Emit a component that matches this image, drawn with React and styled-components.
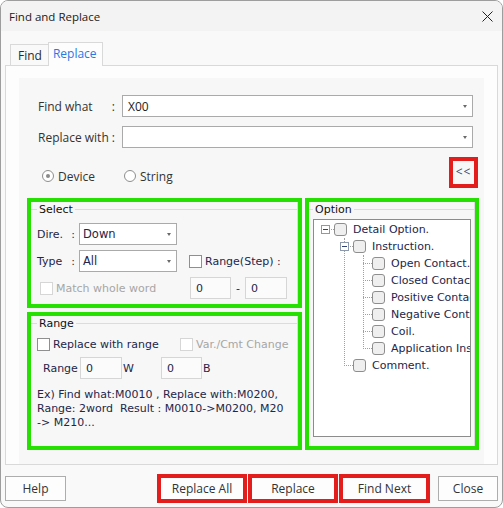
import React from 'react'
import styled, { createGlobalStyle } from 'styled-components'

const UI = `"Open Sans", "Noto Sans", sans-serif`
const TAHOMA = `"DejaVu Sans", "Liberation Sans", sans-serif`
const GREEN = '#25e000'
const RED = '#e31c1c'
const INK = '#23264a'

const GlobalStyle = createGlobalStyle`
  html, body {
    margin: 0;
    padding: 0;
    background: #fff;
  }
  * {
    box-sizing: border-box;
  }
`

function App() {
    return (
        <>
            <GlobalStyle />
            <Window>
                <TitleBar>
                    <span>Find and Replace</span>
                    <svg width="11" height="11" viewBox="0 0 11 11">
                        <path d="M0.5 0.5 L10.5 10.5 M10.5 0.5 L0.5 10.5" stroke="#222" strokeWidth="1" />
                    </svg>
                </TitleBar>

                <Body>
                    <Tabs>
                        <Tab>Find</Tab>
                        <Tab $active>Replace</Tab>
                    </Tabs>

                    <Panel>
                        <Inner>
                            <FormGrid>
                                <FieldLabel><span>Find what</span><span>:</span></FieldLabel>
                                <Combo $wide>X00<Arrow /></Combo>
                                <FieldLabel><span>Replace with</span><span>:</span></FieldLabel>
                                <Combo $wide><Arrow /></Combo>
                            </FormGrid>

                            <RadioRow>
                                <RadioGroup>
                                    <RadioItem><Radio $checked />Device</RadioItem>
                                    <RadioItem><Radio />String</RadioItem>
                                </RadioGroup>
                                <CollapseBox>&lt;&lt;</CollapseBox>
                            </RadioRow>

                            <Groups>
                                <Highlight>
                                    <GroupBox>
                                        <LegendRow><Legend>Select</Legend></LegendRow>
                                        <SelectGrid>
                                            <SmallLabel><span>Dire.</span><span>:</span></SmallLabel>
                                            <Combo>Down<Arrow /></Combo>
                                            <span />
                                            <SmallLabel><span>Type</span><span>:</span></SmallLabel>
                                            <Combo>All<Arrow /></Combo>
                                            <CheckItem $right><Check />Range(Step) :</CheckItem>
                                            <CheckItem $disabled $span><Check $disabled />Match whole word</CheckItem>
                                            <StepInputs>
                                                <NumBox $w={41}>0</NumBox>
                                                <Dash>-</Dash>
                                                <NumBox $w={42}>0</NumBox>
                                            </StepInputs>
                                        </SelectGrid>
                                    </GroupBox>
                                </Highlight>

                                <Highlight $tall>
                                    <GroupBox>
                                        <LegendRow $short><Legend>Option</Legend></LegendRow>
                                        <TreeBox>
                                            <TreeRow $level={0} $expander>
                                                <Expander />
                                                <TreeCheck />
                                                Detail Option.
                                            </TreeRow>
                                            <Branch $level={1}>
                                                <TreeRow $level={1} $expander>
                                                    <Expander />
                                                    <TreeCheck />
                                                    Instruction.
                                                </TreeRow>
                                                <Branch $level={2}>
                                                    {['Open Contact.', 'Closed Contact.', 'Positive Contact.', 'Negative Contact.', 'Coil.', 'Application Instruction.'].map((t) => (
                                                        <TreeRow key={t} $level={2}>
                                                            <Slot />
                                                            <TreeCheck />
                                                            {t}
                                                        </TreeRow>
                                                    ))}
                                                </Branch>
                                                <TreeRow $level={1}>
                                                    <Slot />
                                                    <TreeCheck />
                                                    Comment.
                                                </TreeRow>
                                            </Branch>
                                        </TreeBox>
                                    </GroupBox>
                                </Highlight>

                                <Highlight>
                                    <GroupBox>
                                        <LegendRow><Legend>Range</Legend></LegendRow>
                                        <RangeBody>
                                            <RangeChecks>
                                                <CheckItem><Check />Replace with range</CheckItem>
                                                <CheckItem $disabled><Check $disabled />Var./Cmt Change</CheckItem>
                                            </RangeChecks>
                                            <RangeInputs>
                                                <UnitLabel $w={38}>Range</UnitLabel>
                                                <NumBox $w={42}>0</NumBox>
                                                <UnitLabel $w={39}>W</UnitLabel>
                                                <NumBox $w={41}>0</NumBox>
                                                <UnitLabel>B</UnitLabel>
                                            </RangeInputs>
                                            <Example>
                                                <span>Ex) Find what:M0010 , Replace with:M0200,</span>
                                                <span>Range: 2word  Result : M0010-&gt;M0200, M20</span>
                                                <span>-&gt; M210...</span>
                                            </Example>
                                        </RangeBody>
                                    </GroupBox>
                                </Highlight>
                            </Groups>
                        </Inner>
                    </Panel>

                    <Footer>
                        <Button $w={61}>Help</Button>
                        <RedGroup>
                            <RedBox $w={90}><Face>Replace All</Face></RedBox>
                            <RedBox $w={90}><Face>Replace</Face></RedBox>
                            <RedBox $w={91}><Face>Find Next</Face></RedBox>
                        </RedGroup>
                        <Button $w={60} $close>Close</Button>
                    </Footer>
                </Body>
            </Window>
        </>
    )
}

export default App

const Window = styled.div`
    width: 503px;
    height: 508px;
    border: 1px solid #9d9d9d;
    border-radius: 8px;
    overflow: hidden;
    background: #f9f9f9;
    display: flex;
    flex-direction: column;
    font-family: ${UI};
    font-size: 12px;
    color: #2a2a2a;
`

const TitleBar = styled.div`
    height: 30px;
    flex-shrink: 0;
    background: #f3f3f3;
    display: flex;
    align-items: center;
    justify-content: space-between;
    padding: 0 9px 0 8px;
    font-size: 11.5px;
    color: #1a1a1a;
`

const Body = styled.div`
    flex: 1;
    padding: 11px 4px 0 4px;
`

const Tabs = styled.div`
    display: flex;
    align-items: flex-end;
    height: 23px;
    margin-left: 5px;
`

const Tab = styled.div`
    position: relative;
    z-index: 1;
    height: ${(p) => (p.$active ? '24px' : '21px')};
    margin-bottom: ${(p) => (p.$active ? '-1px' : '0')};
    padding: ${(p) => (p.$active ? '2px 5px 0 4px' : '2px 6px 0 7px')};
    border: 1px solid #d9d9d9;
    border-bottom: none;
    border-right: ${(p) => (p.$active ? '1px solid #d9d9d9' : 'none')};
    background: ${(p) => (p.$active ? '#fdfdfd' : '#f9f9f9')};
    color: ${(p) => (p.$active ? '#2b78e4' : '#2a2a2a')};
    font-size: 12px;
    line-height: 18px;
`

const Panel = styled.div`
    height: 400px;
    border: 1px solid #d9d9d9;
    background: #fdfdfd;
    padding: 12px 13px 0 13px;
`

const Inner = styled.div`
    height: 386px;
    background: #f7f7f7;
    padding: 17px 4px 0 8px;
`

const FormGrid = styled.div`
    display: grid;
    grid-template-columns: 84px 1fr;
    row-gap: 9px;
    padding: 0 7px 0 11px;
`

const FieldLabel = styled.div`
    display: flex;
    justify-content: space-between;
    align-items: center;
    padding-right: 7px;
    color: #333;
`

const Combo = styled.div`
    position: relative;
    height: 22px;
    width: ${(p) => (p.$wide ? 'auto' : '98px')};
    border: 1px solid #aaaaaa;
    background: #fff;
    display: flex;
    align-items: center;
    padding-left: ${(p) => (p.$wide ? '5px' : '3px')};
    font-family: ${(p) => (p.$wide ? UI : TAHOMA)};
    font-size: ${(p) => (p.$wide ? '12px' : '11.5px')};
    color: ${(p) => (p.$wide ? '#222' : INK)};
`

const Arrow = styled.span`
    position: absolute;
    right: 5px;
    top: 9px;
    width: 0;
    height: 0;
    border-left: 2.5px solid transparent;
    border-right: 2.5px solid transparent;
    border-top: 3px solid #6a6a6a;
`

const RadioRow = styled.div`
    margin-top: 9px;
    height: 31px;
    display: flex;
    align-items: center;
    padding: 0 2px 0 15px;
`

const RadioGroup = styled.div`
    display: grid;
    grid-template-columns: 82px auto;
    margin-top: 7px;
`

const RadioItem = styled.label`
    display: flex;
    align-items: center;
    gap: 4px;
    height: 16px;
    color: #333;
`

const Radio = styled.span`
    width: 12px;
    height: 12px;
    border-radius: 50%;
    border: 1px solid #8e8e8e;
    background: #fff;
    display: flex;
    align-items: center;
    justify-content: center;

    &::after {
        content: '';
        display: ${(p) => (p.$checked ? 'block' : 'none')};
        width: 4px;
        height: 4px;
        border-radius: 50%;
        background: #8a8a8a;
    }
`

const CollapseBox = styled.div`
    margin-left: auto;
    width: 29px;
    height: 31px;
    border: 4px solid ${RED};
    display: flex;
    align-items: center;
    justify-content: center;
    letter-spacing: 1px;
    color: #3a4a6a;
    font-size: 12px;
    padding-bottom: 2px;
`

const Groups = styled.div`
    margin-top: 10px;
    display: grid;
    grid-template-columns: 275px 174px;
    grid-template-rows: 110px 138px;
    column-gap: 3px;
    row-gap: 4px;
`

const Highlight = styled.div`
    border: 4px solid ${GREEN};
    grid-row: ${(p) => (p.$tall ? '1 / 3' : 'auto')};
    grid-column: ${(p) => (p.$tall ? '2' : '1')};
    min-height: 0;
`

const GroupBox = styled.div`
    height: 100%;
    border-right: 1px solid #dcdcdc;
    display: flex;
    flex-direction: column;
    font-family: ${TAHOMA};
    font-size: 11px;
    color: ${INK};
`

const LegendRow = styled.div`
    display: flex;
    align-items: center;
    height: 14px;
    flex-shrink: 0;

    &::before {
        content: '';
        width: ${(p) => (p.$short ? '4px' : '6px')};
        height: 1px;
        background: #dcdcdc;
    }

    &::after {
        content: '';
        flex: 1;
        height: 1px;
        background: #dcdcdc;
    }
`

const Legend = styled.span`
    padding: 0 2px;
    color: #111;
`

const SelectGrid = styled.div`
    margin-top: 7px;
    padding-left: 6px;
    display: grid;
    grid-template-columns: 42px 98px auto;
    grid-template-rows: 22px 22px 22px;
    row-gap: 5px;
    align-items: center;
`

const SmallLabel = styled.div`
    display: flex;
    justify-content: space-between;
    padding-right: 4px;
`

const CheckItem = styled.label`
    display: flex;
    align-items: center;
    gap: 3px;
    white-space: nowrap;
    color: ${(p) => (p.$disabled ? '#a6a6a6' : INK)};
    grid-column: ${(p) => (p.$span ? '1 / 3' : 'auto')};
    padding-left: ${(p) => (p.$span ? '3px' : '0')};
    margin-left: ${(p) => (p.$right ? '12px' : '0')};
`

const Check = styled.span`
    width: 13px;
    height: 13px;
    flex-shrink: 0;
    border: 1px solid ${(p) => (p.$disabled ? '#d6d6d6' : '#8f8f8f')};
    background: #fff;
`

const StepInputs = styled.div`
    display: flex;
    align-items: center;
    margin-left: 13px;
`

const NumBox = styled.div`
    width: ${(p) => p.$w}px;
    height: 22px;
    border: 1px solid #d6d6d6;
    background: #fbfbfb;
    padding-left: 5px;
    display: flex;
    align-items: center;
    color: ${INK};
`

const Dash = styled.span`
    width: 14px;
    text-align: center;
`

const RangeBody = styled.div`
    padding-left: 6px;
`

const RangeChecks = styled.div`
    margin-top: 6px;
    height: 16px;
    display: grid;
    grid-template-columns: 143px auto;
    align-items: center;
`

const RangeInputs = styled.div`
    margin-top: 5px;
    height: 22px;
    display: flex;
    align-items: center;
    padding-left: 5px;
`

const UnitLabel = styled.span`
    width: ${(p) => (p.$w ? `${p.$w}px` : 'auto')};
    padding-left: 1px;
`

const Example = styled.div`
    margin-top: 9px;
    line-height: 14px;

    span {
        display: block;
        white-space: pre;
    }
`

const TreeBox = styled.div`
    margin: 3px 3px 0 4px;
    height: 218px;
    border: 1px solid #8c8c8c;
    background: #fff;
    padding-top: 1px;
    overflow: hidden;
`

const Branch = styled.div`
    position: relative;

    &::before {
        content: '';
        position: absolute;
        left: ${(p) => 7 + 19 * p.$level + 4}px;
        top: 0;
        bottom: 8px;
        border-left: 1px dotted #a0a0a0;
    }
`

const TreeRow = styled.div`
    position: relative;
    height: 17px;
    display: flex;
    align-items: center;
    padding-left: ${(p) => 7 + 19 * p.$level}px;
    white-space: nowrap;
    color: ${INK};

    &::before {
        content: '';
        position: absolute;
        left: ${(p) => 7 + 19 * p.$level + 4}px;
        top: 8px;
        width: 9px;
        border-top: 1px dotted #a0a0a0;
    }
`

const Slot = styled.span`
    width: 9px;
    height: 9px;
    margin-right: 4px;
    flex-shrink: 0;
`

const Expander = styled.span`
    position: relative;
    z-index: 1;
    width: 9px;
    height: 9px;
    margin-right: 4px;
    flex-shrink: 0;
    border: 1px solid #8c99ad;
    background: #fff;

    &::after {
        content: '';
        position: absolute;
        left: 1px;
        top: 3px;
        width: 5px;
        height: 1px;
        background: #2f4275;
    }
`

const TreeCheck = styled.span`
    position: relative;
    z-index: 1;
    width: 13px;
    height: 13px;
    flex-shrink: 0;
    margin-right: 6px;
    border: 1px solid #8e8e8e;
    border-radius: 3px;
    background: #efefef;
`

const Footer = styled.div`
    margin-top: 9px;
    display: flex;
    align-items: center;
`

const Button = styled.div`
    width: ${(p) => p.$w}px;
    height: 25px;
    margin-left: ${(p) => (p.$close ? '8px' : '0')};
    border: 1px solid #adadad;
    background: #fdfdfd;
    display: flex;
    align-items: center;
    justify-content: center;
    color: #333;
`

const RedGroup = styled.div`
    margin-left: auto;
    display: flex;
    gap: 1px;
`

const RedBox = styled.div`
    width: ${(p) => p.$w}px;
    height: 29px;
    border: 4px solid ${RED};
    background: #fdfdfd;
`

const Face = styled.div`
    height: 100%;
    display: flex;
    align-items: center;
    justify-content: center;
    color: #333;
`
